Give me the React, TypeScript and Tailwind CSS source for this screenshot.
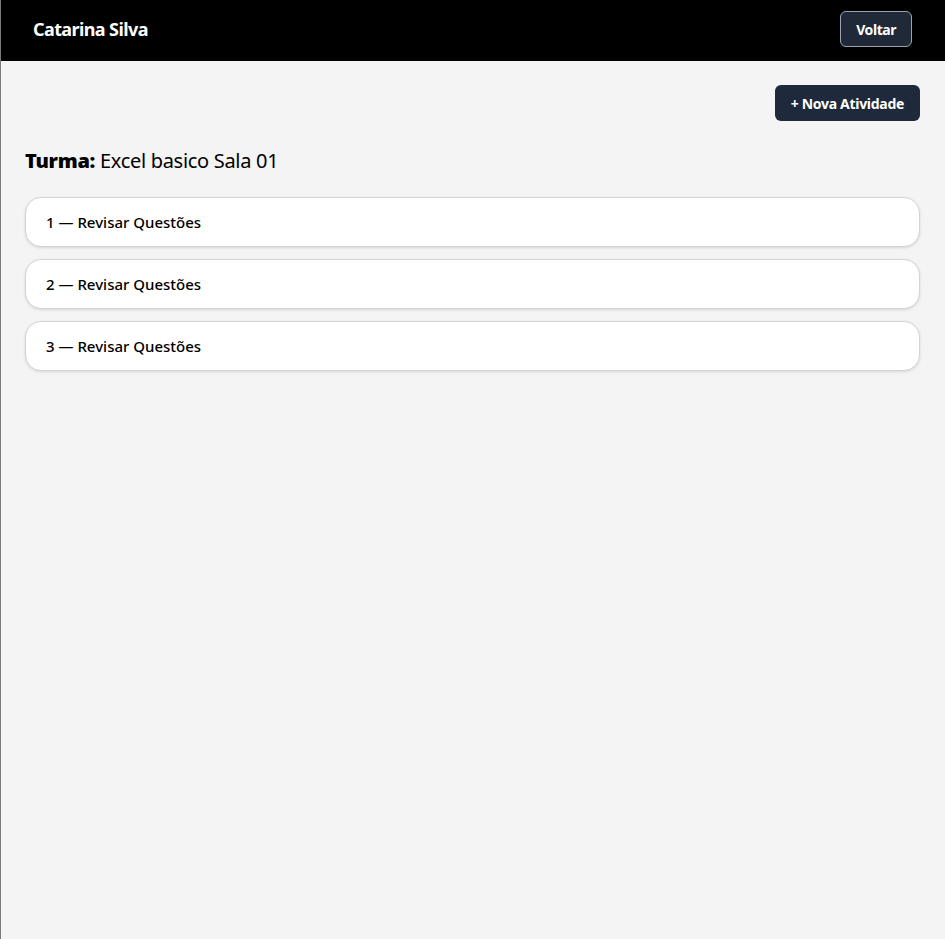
import React from "react";

export default function App() {
  const items = [1, 2, 3];
  return (
    <div
      className="min-h-[939px] bg-[#f4f4f4] border-l border-[#7a7a7a] flex flex-col"
      style={{ fontFamily: '"Noto Sans", "Open Sans", sans-serif' }}
    >
      <header className="h-[61px] bg-black flex items-center justify-between pl-[32px] pr-[33px] pb-[3px]">
        <span className="text-white font-bold text-[18px] tracking-[-0.6px]">Catarina Silva</span>
        <button className="h-[36px] px-[15px] rounded-[6px] bg-[#1f2937] border border-[#9ca3af] text-white font-bold text-[14px] tracking-[-0.45px]">
          Voltar
        </button>
      </header>
      <main className="pl-[24px] pr-[25px] pt-[24px] flex flex-col">
        <div className="flex justify-end">
          <button className="h-[36px] px-[16px] rounded-[6px] bg-[#1e293b] text-white font-bold text-[14px] tracking-[-0.3px]">
            + Nova Atividade
          </button>
        </div>
        <h2 className="mt-[26px] text-[20px] text-black leading-[28px] tracking-[-0.3px]">
          <span className="font-black">Turma:</span> Excel basico Sala 01
        </h2>
        <div className="mt-[22px] flex flex-col gap-[12px]">
          {items.map((n) => (
            <div
              key={n}
              className="h-[50px] bg-white rounded-[16px] border border-[#d4d4d8] shadow-[0_1px_3px_rgba(0,0,0,0.12)] flex items-center px-[20px]"
            >
              <span className="text-[15px] font-medium text-black">
                {n} — Revisar Questões
              </span>
            </div>
          ))}
        </div>
      </main>
    </div>
  );
}
